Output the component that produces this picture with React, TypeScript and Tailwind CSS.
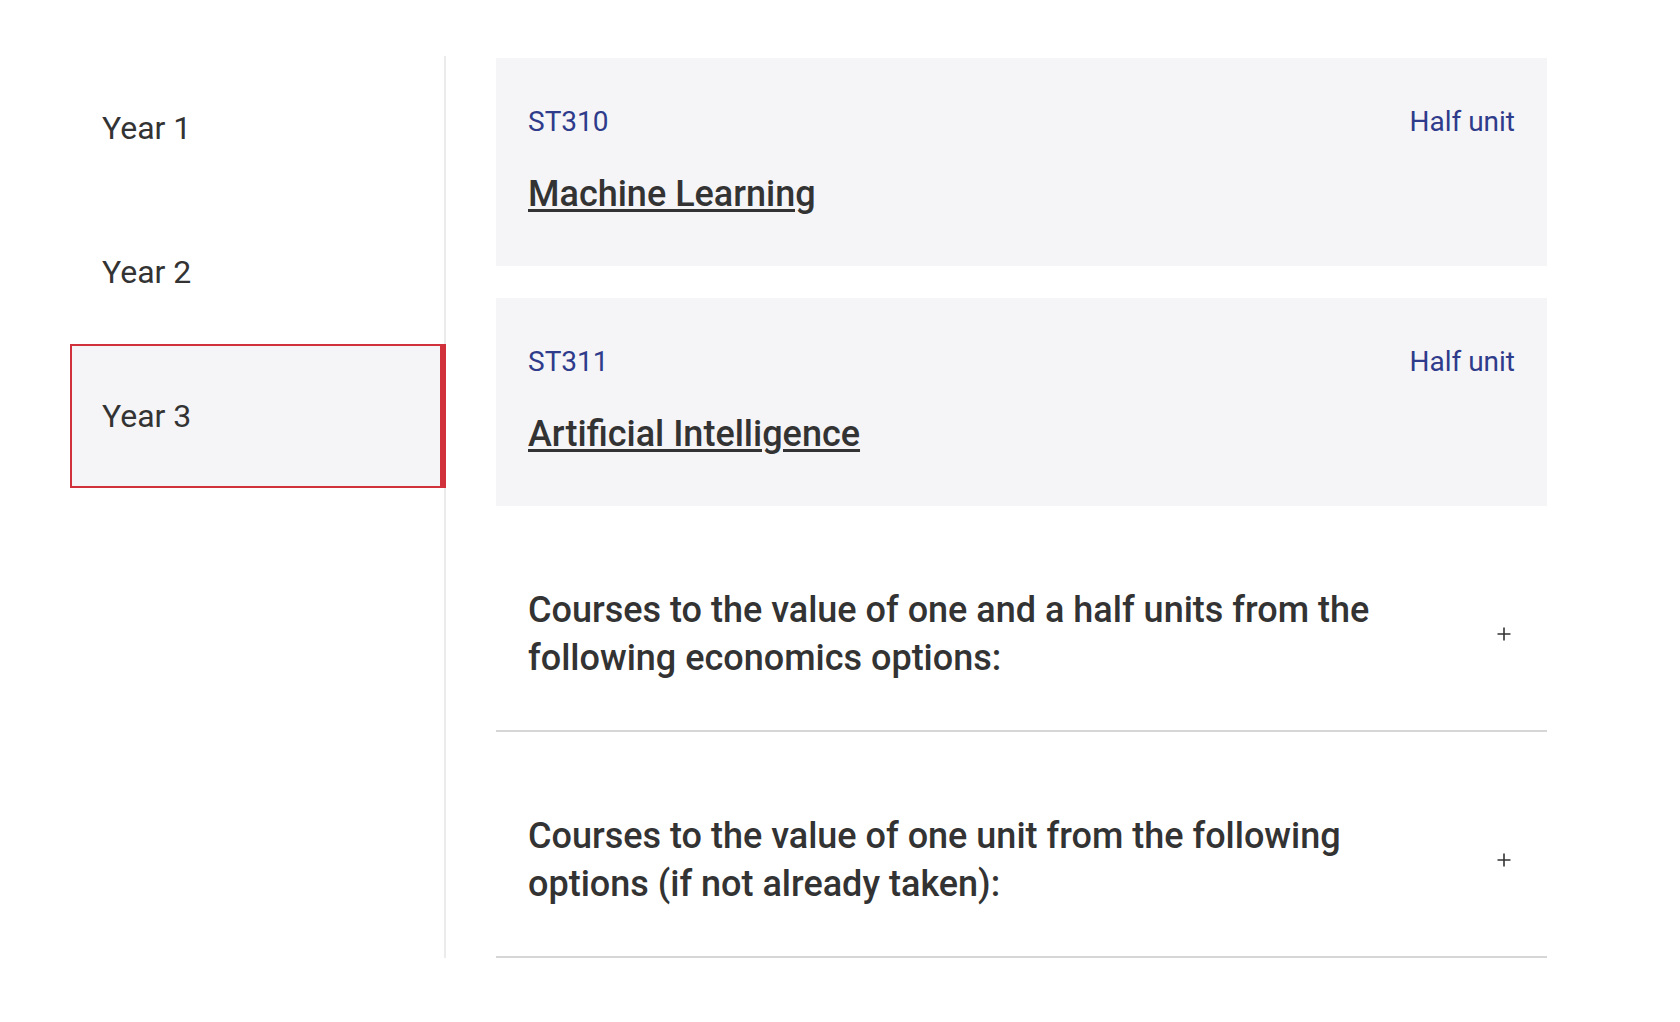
import React, { useState } from 'react';

// Programme structure: year tabs and the courses for the selected year
const years = ['Year 1', 'Year 2', 'Year 3'];

const compulsory = [
  { code: 'ST310', unit: 'Half unit', title: 'Machine Learning' },
  { code: 'ST311', unit: 'Half unit', title: 'Artificial Intelligence' },
];

const optionGroups = [
  'Courses to the value of one and a half units from the following economics options:',
  'Courses to the value of one unit from the following options (if not already taken):',
];

function PlusIcon() {
  return (
    <svg width="14" height="14" viewBox="0 0 14 14" className="text-[#333333]">
      <path d="M7 0.5V13.5M0.5 7H13.5" stroke="currentColor" strokeWidth="1.6" fill="none" />
    </svg>
  );
}

export default function App() {
  const [activeYear, setActiveYear] = useState(2);

  return (
    <div className="min-h-screen bg-white pt-[56px] text-[#333333] [font-family:Roboto,'Liberation_Sans',sans-serif]">
      <div className="flex px-[70px]">
        {/* Year tabs */}
        <nav className="w-[376px] shrink-0 border-r-2 border-[#ebebeb]">
          {years.map((year, index) => (
            <button
              key={year}
              onClick={() => setActiveYear(index)}
              className={
                index === activeYear
                  ? 'flex h-[144px] w-[calc(100%+2px)] -mr-[2px] items-center border-2 border-r-[6px] border-[#d0313a] bg-[#f5f5f7] pl-[30px] text-left text-[32px] text-[#333333]'
                  : 'flex h-[144px] w-full items-center border-2 border-transparent pl-[30px] text-left text-[32px] text-[#333333]'
              }
            >
              {year}
            </button>
          ))}
        </nav>

        {/* Courses */}
        <main className="ml-[50px] w-[1051px] pt-[2px]">
          <div className="flex flex-col gap-[32px]">
            {compulsory.map((course) => (
              <div key={course.code} className="bg-[#f5f5f7] px-[32px] pt-[43px] pb-[48px]">
                <div className="flex items-center justify-between text-[28px] leading-[42px] text-[#2f3b8b]">
                  <span>{course.code}</span>
                  <span>{course.unit}</span>
                </div>
                <h3 className="mt-[27px] text-[36px] leading-[48px] font-medium">
                  <a href="#" className="underline decoration-[2.5px] underline-offset-[3px]">
                    {course.title}
                  </a>
                </h3>
              </div>
            ))}
          </div>

          {optionGroups.map((group) => (
            <div
              key={group}
              className="mt-[32px] flex items-center justify-between border-b-2 border-[#d6d6d6] py-[48px] pl-[32px] pr-[36px]"
            >
              <h3 className="w-[890px] text-[36px] leading-[48px] font-medium">{group}</h3>
              <PlusIcon />
            </div>
          ))}
        </main>
      </div>
    </div>
  );
}
